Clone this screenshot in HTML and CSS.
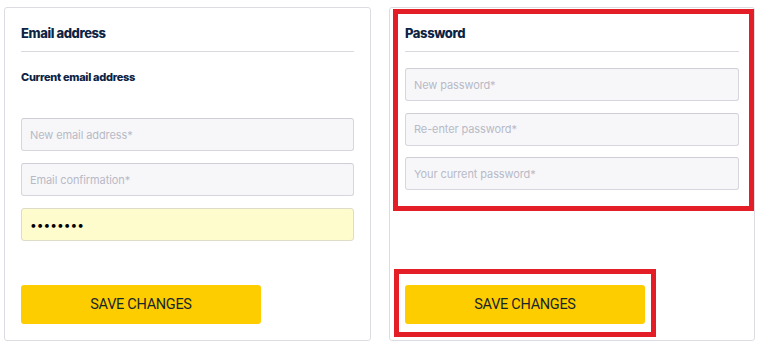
FILE: index.html
```html
<!DOCTYPE html>
<html>
<head>
<meta charset="utf-8">
<link rel="stylesheet" href="styles.css">
</head>
<body>
<div class="page">
  <div class="card">
    <div class="card-head"><h2 class="title">Email address</h2></div>
    <div class="label">Current email address</div>
    <div class="fields fields-email">
      <input class="field" type="text" placeholder="New email address*">
      <input class="field" type="text" placeholder="Email confirmation*">
      <input class="field field-filled" type="password" value="abcdefgh">
    </div>
    <button class="btn">SAVE CHANGES</button>
  </div>
  <div class="card card-pass">
    <div class="card-head"><h2 class="title">Password</h2></div>
    <div class="fields fields-pass">
      <input class="field" type="password" placeholder="New password*">
      <input class="field" type="password" placeholder="Re-enter password*">
      <input class="field" type="password" placeholder="Your current password*">
    </div>
    <button class="btn">SAVE CHANGES</button>
    <div class="mark mark-fields"></div>
    <div class="mark mark-btn"></div>
  </div>
</div>
</body>
</html>
```
FILE: styles.css
```css
* { box-sizing: border-box; }
html, body { margin: 0; padding: 0; background: #ffffff; }
body { font-family: Inter, "Noto Sans", sans-serif; color: #0e2546; }
.page {
  display: flex;
  gap: 18px;
  padding: 7px 0 0 4px;
}
.card {
  position: relative;
  display: flex;
  flex-direction: column;
  height: 334px;
  border: 1px solid #dcdde2;
  border-radius: 3px;
  padding: 17px 16px 16px 16px;
  background: #fff;
}
.card:first-child { width: 367px; }
.card-pass { width: 366px; padding-left: 15px; padding-right: 15px; }
.card-head {
  border-bottom: 1px solid #d9dadf;
  padding-bottom: 10px;
}
.title {
  margin: 0;
  font-size: 13px;
  line-height: 16px;
  font-weight: 800;
  letter-spacing: -0.4px;
  color: #0c2344;
}
.label {
  margin-top: 18px;
  font-size: 11px;
  line-height: 14px;
  font-weight: 800;
  letter-spacing: -0.3px;
  color: #0c2344;
}
.fields {
  display: flex;
  flex-direction: column;
  gap: 12px;
}
.fields-email { margin-top: 34px; }
.fields-pass { margin-top: 16px; gap: 11.5px; }
.field {
  display: block;
  width: 100%;
  height: 33px;
  border: 1px solid #d6d7de;
  border-top-color: #cdced6;
  border-radius: 3px;
  background: #f7f7fa;
  padding: 0 8px;
  font-family: Inter, "Noto Sans", sans-serif;
  font-size: 11px;
  color: #000;
  outline: none;
}
.field::placeholder { color: #b7bac6; letter-spacing: -0.1px; }
.field-filled {
  background: #fefbcc;
  border-color: #dddcc8;
  font-size: 12px;
  letter-spacing: 0;
}
.btn {
  margin-top: auto;
  width: 240px;
  height: 39px;
  border: none;
  border-radius: 3px;
  background: #fdcd00;
  color: #17262a;
  font-family: Roboto, "Noto Sans", sans-serif;
  font-size: 14.5px;
  letter-spacing: -0.3px;
  padding: 0;
}
.mark {
  position: absolute;
  border: 5px solid #e31e26;
}
.mark-fields {
  left: 3px;
  top: 1px;
  width: 361px;
  height: 202px;
}
.mark-btn {
  left: 4px;
  top: 261px;
  width: 262px;
  height: 68px;
}
```
